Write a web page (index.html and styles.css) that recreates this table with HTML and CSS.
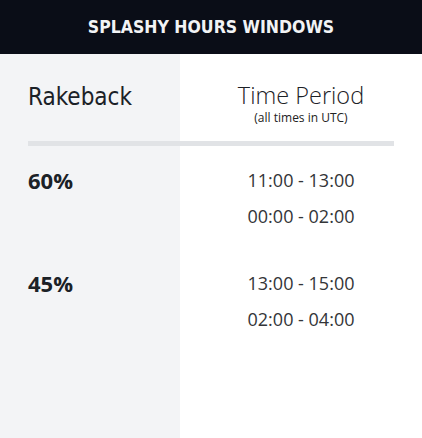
FILE: index.html
```html
<!DOCTYPE html>
<html lang="en">
<head>
<meta charset="utf-8">
<title>Splashy Hours Windows</title>
<link rel="stylesheet" href="styles.css">
</head>
<body>
<div class="page">
  <header class="banner">SPLASHY HOURS WINDOWS</header>
  <div class="left-bg"></div>
  <div class="head-cell head-left"><h2 class="head-title">Rakeback</h2></div>
  <div class="head-cell head-right">
    <h2 class="head-title head-light">Time Period</h2>
    <div class="head-sub">(all times in UTC)</div>
  </div>
  <div class="divider"></div>
  <div class="cell cell-left row-a"><span class="pct">60%</span></div>
  <div class="cell cell-right row-a">
    <div class="time">11:00 - 13:00</div>
    <div class="time">00:00 - 02:00</div>
  </div>
  <div class="cell cell-left row-b"><span class="pct">45%</span></div>
  <div class="cell cell-right row-b">
    <div class="time">13:00 - 15:00</div>
    <div class="time">02:00 - 04:00</div>
  </div>
</div>
</body>
</html>
```
FILE: styles.css
```css
* { box-sizing: border-box; }
html, body { margin: 0; padding: 0; background: #ffffff; }
.page {
  display: grid;
  grid-template-columns: 180px 1fr;
  grid-template-rows: 54px auto 5px auto auto 1fr;
  min-height: 100vh;
}
.banner {
  grid-column: 1 / -1;
  grid-row: 1;
  background: #0a0d17;
  color: #f2f3f5;
  font-family: "DejaVu Sans Condensed", "DejaVu Sans", sans-serif;
  font-weight: 700;
  font-size: 17.5px;
  display: flex;
  align-items: center;
  justify-content: center;
  padding-bottom: 1px;
}
.left-bg {
  grid-column: 1;
  grid-row: 2 / -1;
  background: #f3f4f6;
}
.head-cell { grid-row: 2; padding-top: 28px; }
.head-left { grid-column: 1; padding-left: 28px; }
.head-right { grid-column: 2; text-align: center; padding-bottom: 16px; }
.head-title {
  margin: 0;
  font-family: "DejaVu Sans Condensed", "DejaVu Sans", sans-serif;
  font-weight: 400;
  font-size: 24px;
  line-height: 30px;
  color: #1b2127;
}
.head-light {
  font-family: "Open Sans", sans-serif;
  font-weight: 300;
  font-size: 23.5px;
  line-height: 26px;
  color: #1c2126;
}
.head-sub {
  margin-top: 3px;
  font-family: "Open Sans", sans-serif;
  font-size: 12px;
  line-height: 14px;
  color: #222;
}
.divider {
  grid-column: 1 / -1;
  grid-row: 3;
  margin: 0 28px;
  background: #e1e3e6;
}
.cell { padding: 16px 0 15px; }
.row-a { grid-row: 4; }
.row-b { grid-row: 5; }
.cell-left { grid-column: 1; padding-left: 28px; line-height: 36px; }
.cell-right { grid-column: 2; text-align: center; }
.pct {
  font-family: "Open Sans", sans-serif;
  font-weight: 700;
  font-size: 22px;
  line-height: 36px;
  color: #1b2127;
}
.time {
  font-family: "Open Sans", sans-serif;
  font-size: 18px;
  line-height: 36px;
  color: #333538;
}
```
